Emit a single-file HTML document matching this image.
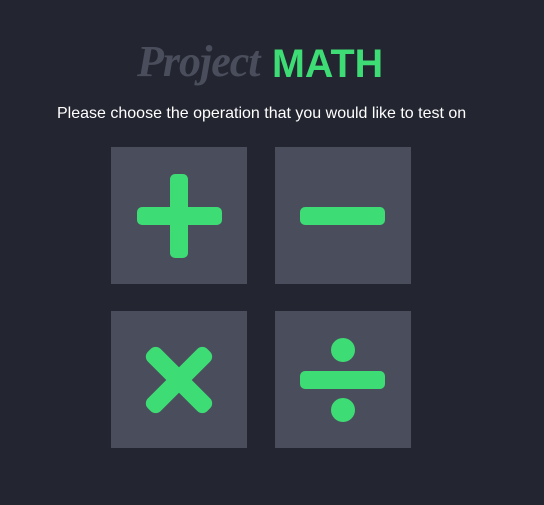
<!DOCTYPE html>
<html><head><style>
body{margin:0;width:544px;height:505px;background:#232531;font-family:"Liberation Sans",sans-serif;position:relative;overflow:hidden}
.t{position:absolute;white-space:nowrap}
.b{position:absolute;width:136px;height:137px;background:#4a4d5b}
svg{position:absolute;left:0;top:0}
</style></head><body>
<div class="t" style="left:137px;top:36px;font-family:'Liberation Serif',serif;font-style:italic;font-weight:bold;font-size:44px;color:#4a4d5b;letter-spacing:-1px">Project</div>
<div class="t" style="left:272px;top:42px;font-weight:bold;font-size:39.5px;color:#3ddc74">MATH</div>
<div class="t" style="left:57px;top:105px;font-size:16px;color:#fff">Please choose the operation that you would like to test on</div>
<div class="b" style="left:111px;top:147px"></div>
<div class="b" style="left:275px;top:147px"></div>
<div class="b" style="left:111px;top:311px"></div>
<div class="b" style="left:275px;top:311px"></div>
<svg width="544" height="505" fill="#3ddc74">
<rect x="137" y="207" width="85" height="18" rx="5"/>
<rect x="170" y="174" width="18" height="84" rx="5"/>
<rect x="300" y="207" width="85" height="18" rx="5"/>
<g transform="rotate(45 179 380)"><rect x="137" y="371" width="84" height="18" rx="7"/><rect x="170" y="338" width="18" height="84" rx="7"/></g>
<rect x="300" y="371" width="85" height="18" rx="5"/>
<circle cx="343" cy="350" r="12"/>
<circle cx="343" cy="410" r="12"/>
</svg>
</body></html>
